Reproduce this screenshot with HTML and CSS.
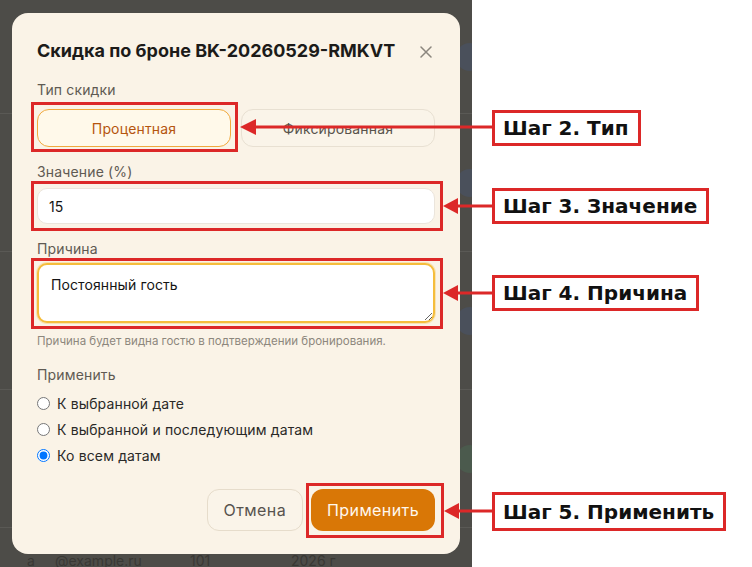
FILE: index.html
```html
<!DOCTYPE html>
<html lang="ru">
<head>
<meta charset="utf-8">
<title>Скидка по броне BK-20260529-RMKVT</title>
<link rel="stylesheet" href="styles.css">
</head>
<body>
<div class="canvas">
  <div class="screen">
    <!-- bookings table behind the dialog -->
    <div class="app">
      <div class="app-row app-row--first"><span class="avatar"></span></div>
      <div class="app-row"><span class="avatar"></span></div>
      <div class="app-row"><span class="avatar"></span></div>
      <div class="app-row"><span class="avatar avatar--green"></span></div>
      <div class="app-row app-row--text">
        <span class="cell">а</span>
        <span class="cell">@example.ru</span>
        <span class="cell">101</span>
        <span class="cell">2026 г</span>
      </div>
    </div>

    <div class="overlay">
      <div class="modal" role="dialog" aria-labelledby="discount-title">
        <div class="modal-head">
          <h2 class="modal-title" id="discount-title">Скидка по броне BK-20260529-RMKVT</h2>
          <button class="close" type="button" aria-label="Закрыть">
            <svg width="12" height="12" viewBox="0 0 12 12" aria-hidden="true">
              <path d="M1 1 L11 11 M11 1 L1 11" stroke="#8b867e" stroke-width="1.5" stroke-linecap="round" fill="none"/>
            </svg>
          </button>
        </div>

        <div class="field field--type">
          <div class="field-label">Тип скидки</div>
          <div class="seg">
            <button class="seg-btn seg-btn--active" type="button">Процентная</button>
            <button class="seg-btn" type="button">Фиксированная</button>
          </div>
        </div>

        <div class="field field--value">
          <label class="field-label" for="discount-value">Значение (%)</label>
          <input class="input" id="discount-value" type="text" value="15">
        </div>

        <div class="field field--reason">
          <label class="field-label" for="discount-reason">Причина</label>
          <textarea class="textarea" id="discount-reason">Постоянный гость</textarea>
          <p class="hint">Причина будет видна гостю в подтверждении бронирования.</p>
        </div>

        <div class="field field--scope">
          <div class="field-label">Применить</div>
          <label class="radio"><input type="radio" name="scope"> К выбранной дате</label>
          <label class="radio"><input type="radio" name="scope"> К выбранной и последующим датам</label>
          <label class="radio"><input type="radio" name="scope" checked> Ко всем датам</label>
        </div>

        <div class="actions">
          <button class="btn btn-ghost" type="button">Отмена</button>
          <button class="btn btn-primary" type="button">Применить</button>
        </div>
      </div>
    </div>
  </div>

  <!-- step callouts -->
  <div class="mark mark--type"></div>
  <div class="mark mark--value"></div>
  <div class="mark mark--reason"></div>
  <div class="mark mark--apply"></div>

  <svg class="arrows" width="752" height="567" viewBox="0 0 752 567" aria-hidden="true">
    <g stroke="#dc2828" stroke-width="3" fill="none">
      <line x1="252" y1="127" x2="493" y2="127"/>
      <line x1="455" y1="206" x2="493" y2="206"/>
      <line x1="455" y1="293" x2="493" y2="293"/>
      <line x1="456" y1="511" x2="493" y2="511"/>
    </g>
    <g fill="#dc2828">
      <polygon points="240,127 256,119 256,135"/>
      <polygon points="443,206 458,198 458,214"/>
      <polygon points="443,293 458,285 458,301"/>
      <polygon points="444,511 459,503 459,519"/>
    </g>
  </svg>

  <div class="step step--2">Шаг 2. Тип</div>
  <div class="step step--3">Шаг 3. Значение</div>
  <div class="step step--4">Шаг 4. Причина</div>
  <div class="step step--5">Шаг 5. Применить</div>
</div>
</body>
</html>
```

FILE: styles.css
```css
html, body {
  margin: 0;
  padding: 0;
}

body {
  width: 752px;
  height: 567px;
  overflow: hidden;
  background: #ffffff;
  font-family: Inter, "Noto Sans", sans-serif;
}

.canvas {
  position: relative;
  width: 752px;
  height: 567px;
}

/* ---------- dimmed application ---------- */
.screen {
  position: relative;
  width: 472px;
  height: 567px;
  overflow: hidden;
  background: #4d4c48;
}

.app {
  display: flex;
  flex-direction: column;
}

.app-row {
  box-sizing: border-box;
  height: 138px;
  border-bottom: 1px solid #5a5955;
  display: flex;
  align-items: center;
  justify-content: flex-end;
}

.app-row--first {
  height: 114px;
}

.avatar {
  width: 28px;
  height: 28px;
  border-radius: 50%;
  background: #4a505b;
  margin-right: -12px;
}

.avatar--green {
  background: #4b5a4d;
}

.app-row--text {
  display: grid;
  grid-template-columns: 28px 135px 101px auto;
  align-items: start;
  justify-content: start;
  padding: 23px 0 0 27px;
  border-bottom: 0;
  font-size: 14px;
  line-height: 20px;
  color: #393834;
}

/* ---------- dialog ---------- */
.overlay {
  position: absolute;
  inset: 0;
  padding: 13px 12px;
  display: flex;
  justify-content: center;
  align-items: flex-start;
}

.modal {
  box-sizing: border-box;
  width: 448px;
  padding: 26px 25px 23px;
  background: #faf3e7;
  border-radius: 16px;
}

.modal-head {
  display: flex;
  align-items: center;
  justify-content: space-between;
  height: 24px;
}

.modal-title {
  margin: 0;
  font-size: 18px;
  font-weight: 700;
  line-height: 24px;
  color: #1c1b19;
}

.close {
  display: flex;
  padding: 0;
  margin: 2px 3px 0 0;
  border: 0;
  background: none;
}

.field-label {
  display: block;
  font-size: 14px;
  line-height: 20px;
  letter-spacing: 0.15px;
  color: #5f5a53;
}

.field--type {
  margin-top: 17px;
}

.field--type .field-label {
  margin-bottom: 9px;
}

.seg {
  display: grid;
  grid-template-columns: 1fr 1fr;
  gap: 10px;
}

.seg-btn {
  height: 38px;
  border: 1px solid #e8e0d2;
  border-radius: 12px;
  background: #faf4e9;
  font-family: inherit;
  font-size: 14px;
  letter-spacing: 0.15px;
  color: #58534c;
}

.seg-btn--active {
  border-color: #f1a93c;
  background: #fff9ea;
  color: #b5550f;
}

.field--value {
  margin-top: 15px;
}

.field--value .field-label {
  margin-bottom: 6px;
}

.input {
  box-sizing: border-box;
  display: block;
  width: 100%;
  height: 36px;
  padding: 0 11px;
  border: 1px solid #ebe5dc;
  border-radius: 10px;
  background: #ffffff;
  font-family: inherit;
  font-size: 14px;
  color: #141414;
  outline: none;
}

.field--reason {
  margin-top: 15px;
}

.field--reason .field-label {
  margin-bottom: 4px;
}

.textarea {
  box-sizing: border-box;
  display: block;
  width: 100%;
  height: 60px;
  padding: 10px 12px;
  border: 2px solid #f5bd3c;
  border-radius: 10px;
  box-shadow: 0 0 0 1px rgba(248, 206, 110, 0.45);
  background: #ffffff;
  font-family: inherit;
  font-size: 14px;
  line-height: 20px;
  letter-spacing: 0.1px;
  color: #141414;
  outline: none;
}

.hint {
  margin: 10px 0 0;
  font-size: 11.5px;
  line-height: 16px;
  color: #8d877d;
}

.field--scope {
  margin-top: 16px;
}

.field--scope .field-label {
  margin-bottom: 5px;
}

.radio {
  display: flex;
  align-items: center;
  height: 26px;
  font-size: 14px;
  letter-spacing: 0.15px;
  color: #2a2927;
}

.radio input {
  width: 13px;
  height: 13px;
  margin: 0 7px 0 0;
}

.actions {
  margin-top: 21px;
  display: flex;
  justify-content: flex-end;
  gap: 8px;
}

.btn {
  height: 42px;
  padding: 0 16px;
  border-radius: 12px;
  font-family: inherit;
  font-size: 16px;
  letter-spacing: 0.4px;
}

.btn-ghost {
  border: 1px solid #e6dccb;
  background: #faf4e9;
  color: #57534e;
}

.btn-primary {
  border: 0;
  background: #d97706;
  color: #fff8ee;
}

/* ---------- step callouts ---------- */
.mark {
  position: absolute;
  box-sizing: border-box;
  border: 3px solid #dc2828;
}

.mark--type   { left: 31px;  top: 102px; width: 207px; height: 50px; }
.mark--value  { left: 31px;  top: 181px; width: 412px; height: 50px; }
.mark--reason { left: 31px;  top: 258px; width: 412px; height: 71px; }
.mark--apply  { left: 306px; top: 483px; width: 138px; height: 55px; }

.arrows {
  position: absolute;
  left: 0;
  top: 0;
  pointer-events: none;
}

.step {
  position: absolute;
  left: 492px;
  box-sizing: border-box;
  height: 36px;
  padding: 0 9px 0 8px;
  display: flex;
  align-items: center;
  border: 3px solid #dc2828;
  background: #ffffff;
  font-family: "DejaVu Sans", sans-serif;
  font-weight: 700;
  font-size: 20px;
  color: #111111;
  white-space: nowrap;
}

.step--2 { top: 110px; }
.step--3 { top: 188px; }
.step--4 { top: 275px; }
.step--5 { top: 492px; height: 39px; }
```
